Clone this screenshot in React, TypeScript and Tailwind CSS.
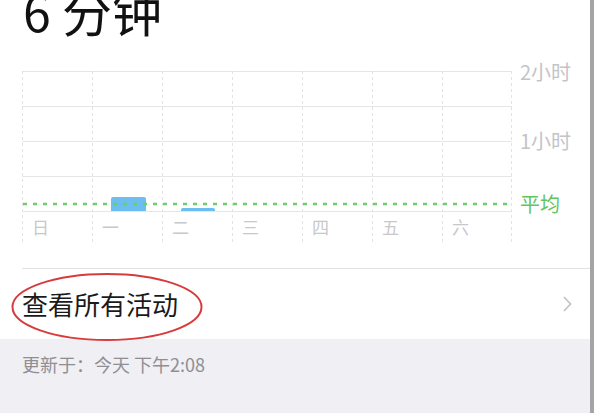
const days = ["日", "一", "二", "三", "四", "五", "六"];

const bars = [
  { x: 89, y: 126, w: 35, h: 14 },
  { x: 159, y: 137, w: 34, h: 3 },
];

function WeekChart() {
  return (
    <div className="flex">
      <div className="relative w-[490px] h-[171px] ml-[22px]">
        <svg className="absolute inset-0" width="490" height="171" viewBox="0 0 490 171">
          {[0, 35, 70, 105, 140].map((y) => (
            <line key={y} x1="0" x2="490" y1={y + 0.5} y2={y + 0.5} stroke="#e6e6e8" strokeWidth="1" />
          ))}
          {[0, 70, 140, 210, 280, 350, 420, 489].map((x) => (
            <line
              key={x}
              x1={x + 0.5}
              x2={x + 0.5}
              y1="0"
              y2="171"
              stroke="#e2e2e4"
              strokeWidth="1"
              strokeDasharray="3 3"
            />
          ))}
          {bars.map((b) => (
            <path
              key={b.x}
              d={`M${b.x} ${b.y + b.h} V${b.y + 2} Q${b.x} ${b.y} ${b.x + 2} ${b.y} H${b.x + b.w - 2} Q${b.x + b.w} ${b.y} ${b.x + b.w} ${b.y + 2} V${b.y + b.h} Z`}
              fill="#6cbdf0"
            />
          ))}
          <line
            x1="1"
            x2="490"
            y1="133"
            y2="133"
            stroke="#6ccd6c"
            strokeWidth="2.5"
            strokeDasharray="4 6"
          />
        </svg>
        <div className="absolute left-0 right-0 bottom-0 grid grid-cols-7 h-[31px]">
          {days.map((d) => (
            <div key={d} className="pl-[10px] text-[17px] leading-[31px] text-[#c8c8cc]">
              {d}
            </div>
          ))}
        </div>
      </div>
      <div className="flex flex-col pl-[8px] text-[20px] leading-[20px]">
        <span className="mt-[-9px] h-[20px] text-[#c4c4c8]">2小时</span>
        <span className="mt-[49px] h-[20px] text-[#c4c4c8]">1小时</span>
        <span className="mt-[43px] h-[20px] text-[#62c462]">平均</span>
      </div>
    </div>
  );
}

export default function App() {
  return (
    <div className="w-[600px] h-[420px] bg-white flex overflow-hidden font-['Noto_Sans_CJK_SC',sans-serif]">
      <div className="w-[590px] h-[413px] flex flex-col">
        <div className="h-[71px] flex flex-col">
          <div className="mt-[-15px] pl-[23px] text-[50px] leading-none text-[#111]">6 分钟</div>
        </div>
        <WeekChart />
        <div className="h-[26px]" />
        <div className="ml-[22px] border-t border-[#e2e2e4]" />
        <div className="relative h-[70px] flex items-center justify-between pl-[22px] pr-[18px]">
          <span className="text-[26px] leading-none text-[#1a1a1a]">查看所有活动</span>
          <svg width="9" height="16" viewBox="0 0 9 16">
            <path d="M1 1 L7.5 8 L1 15" fill="none" stroke="#c4c4c8" strokeWidth="1.8" />
          </svg>
          <svg className="absolute left-[10px] top-[3px]" width="194" height="70" viewBox="0 0 194 70">
            <ellipse cx="97" cy="35" rx="94.5" ry="33" fill="none" stroke="#d83b3b" strokeWidth="2" />
          </svg>
        </div>
        <div className="flex-1 bg-[#efeff4] pl-[22px] pt-[14px]">
          <span className="text-[18px] leading-none text-[#8e8e93]">更新于：今天 下午2:08</span>
        </div>
      </div>
      <div className="w-[4px] h-[413px] bg-[#a4a4a6]" />
    </div>
  );
}
